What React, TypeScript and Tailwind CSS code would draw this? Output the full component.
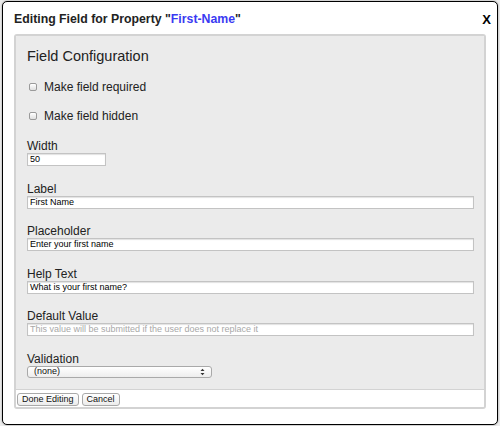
import React from "react";

const fields = [
  { key: "label", title: "Label", value: "First Name" },
  { key: "placeholder", title: "Placeholder", value: "Enter your first name" },
  { key: "help", title: "Help Text", value: "What is your first name?" },
];

const CheckRow = ({ text }: { text: string }) => (
  <label className="flex h-[14px] items-center">
    <span className="ml-[2px] h-[8px] w-[8px] rounded-[2px] border border-[#9a9a9a] bg-gradient-to-b from-white to-[#e0e0e0] shadow-[inset_0_1px_0_#fff]" />
    <span className="ml-[7px] text-[12px] leading-[14px] text-[#222]">{text}</span>
  </label>
);

const FieldLabel = ({ children }: { children: React.ReactNode }) => (
  <div className="text-[12px] leading-[14px] text-[#222]">{children}</div>
);

const TextBox = ({ value, placeholder, className }: { value?: string; placeholder?: string; className?: string }) => (
  <div
    className={
      "flex h-[13px] items-center border border-[#c3c3c3] bg-white pl-[2px] text-[9px] leading-[11px] shadow-[inset_0_1px_1px_rgba(0,0,0,0.12)] " +
      (className ?? "")
    }
  >
    {value ? <span className="text-black">{value}</span> : <span className="text-[#a8a8a8]">{placeholder}</span>}
  </div>
);

const Button = ({ text }: { text: string }) => (
  <button className="flex h-[13px] items-center rounded-[3px] border border-[#a9a9a9] bg-gradient-to-b from-white to-[#ececec] px-[4px] text-[9px] leading-[11px] text-[#111]">
    {text}
  </button>
);

export default function App() {
  return (
    <div className="h-[426px] w-[500px] overflow-hidden bg-[#ececec] pt-[1px] pl-[2px] font-['Liberation_Sans',Arial,sans-serif]">
      <div className="h-[424px] w-[496px] rounded-[5px] border border-black bg-white shadow-[0_0_2px_rgba(0,0,0,0.4)]">
        <div className="flex items-center justify-between pt-[10px] pr-[6px] pl-[11px]">
          <h1 className="text-[12.3px] leading-[15px] font-bold text-[#222]">
            Editing Field for Property "<span className="text-[#3a3af2]">First-Name</span>"
          </h1>
          <span className="text-[13px] leading-[15px] font-bold text-black">X</span>
        </div>

        <div className="mt-[7px] ml-[11px] w-[472px] overflow-hidden rounded-[3px] border-2 border-[#d3d3d3]">
          <div className="bg-[#ebebeb] px-[11px] pt-[12px] pb-[11px]">
            <h2 className="text-[14.5px] leading-[17px] text-[#222]">Field Configuration</h2>
            <div className="mt-[15px] flex flex-col gap-[15px]">
              <CheckRow text="Make field required" />
              <CheckRow text="Make field hidden" />
            </div>

            <div className="mt-[16px]">
              <FieldLabel>Width</FieldLabel>
              <TextBox value="50" className="w-[79px]" />
            </div>

            {fields.map((f) => (
              <div key={f.key} className="mt-[15.5px]">
                <FieldLabel>{f.title}</FieldLabel>
                <TextBox value={f.value} className="w-[447px]" />
              </div>
            ))}

            <div className="mt-[15.5px]">
              <FieldLabel>Default Value</FieldLabel>
              <TextBox placeholder="This value will be submitted if the user does not replace it" className="w-[447px]" />
            </div>

            <div className="mt-[15.5px]">
              <FieldLabel>Validation</FieldLabel>
              <div className="flex h-[12px] w-[185px] items-center justify-between rounded-[3px] border border-[#a9a9a9] bg-gradient-to-b from-white to-[#ededed] pr-[6px] pl-[6px] text-[9px] leading-[11px] text-[#111]">
                <span>(none)</span>
                <svg width="5" height="8" viewBox="0 0 5 8">
                  <path d="M0.5 3 L2.5 0.8 L4.5 3 Z" fill="#333" />
                  <path d="M0.5 5 L2.5 7.2 L4.5 5 Z" fill="#333" />
                </svg>
              </div>
            </div>
          </div>

          <div className="flex gap-[3px] border-t border-[#d3d3d3] bg-white pt-[3px] pb-[1px] pl-[1px]">
            <Button text="Done Editing" />
            <Button text="Cancel" />
          </div>
        </div>
      </div>
    </div>
  );
}
